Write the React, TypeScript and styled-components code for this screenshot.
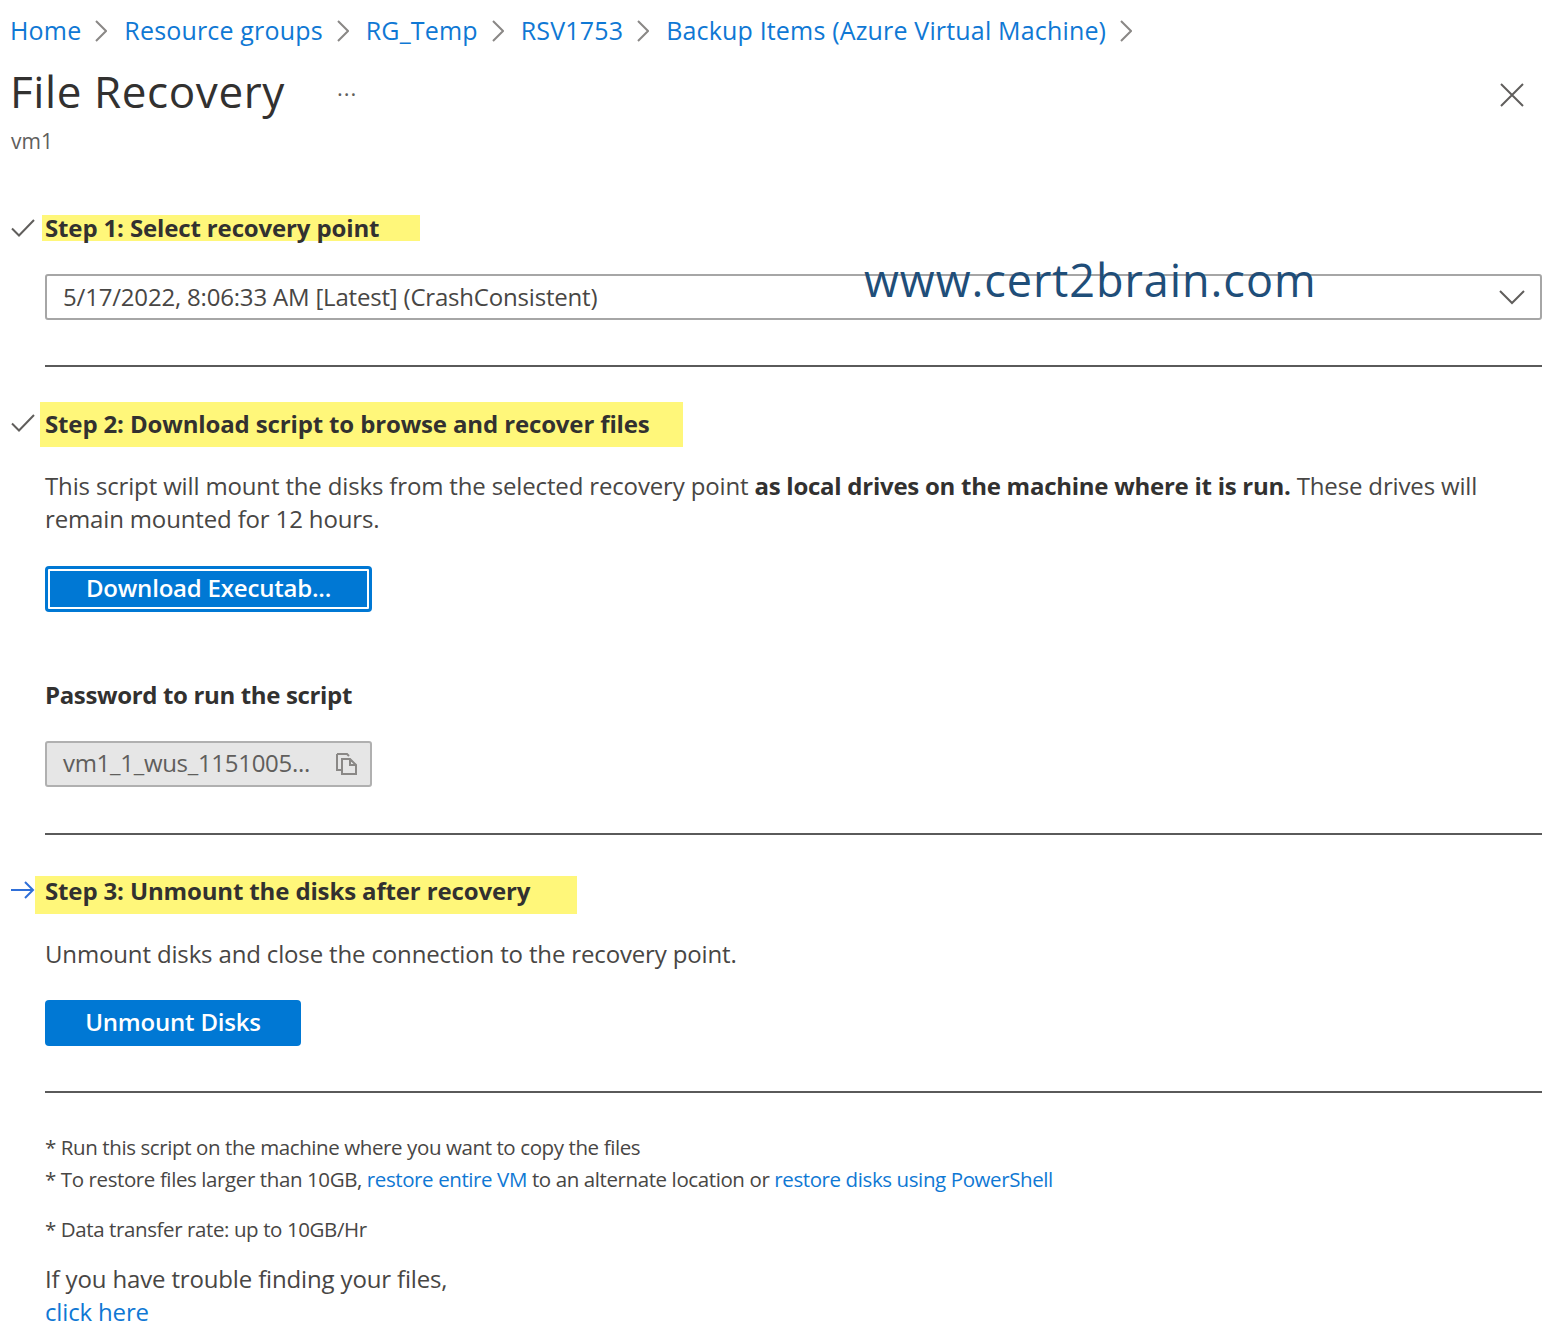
import React from "react";
import styled, { createGlobalStyle } from "styled-components";

const Global = createGlobalStyle`
  html, body { margin: 0; padding: 0; background: #fff; }
  body { font-family: "Open Sans", "Liberation Sans", sans-serif; color: #323130; }
`;

const Page = styled.div`
  position: relative;
  width: 1550px;
  height: 1343px;
  box-sizing: border-box;
  padding: 0 8px 0 11px;
  overflow: hidden;
`;

const Breadcrumb = styled.nav`
  display: flex;
  align-items: center;
  height: 60px;
  margin-left: -1px;
  font-size: 25px;
  letter-spacing: 0.17px;
`;

const Crumb = styled.a`
  color: #0f78d4;
`;

const CrumbSep = styled.svg`
  width: 12px;
  height: 22px;
  margin: 2px 17px 0 14px;
  fill: none;
  stroke: #8a8886;
  stroke-width: 2;
`;

const TitleRow = styled.div`
  display: flex;
  align-items: center;
  height: 66px;
`;

const Title = styled.h1`
  margin: -4px 0 0 -1px;
  font-size: 44px;
  font-weight: 500;
  letter-spacing: 0.6px;
  color: #323130;
`;

const More = styled.span`
  margin: 0 0 0 52px;
  font-size: 22px;
  letter-spacing: 1px;
  color: #605e5c;
`;

const Close = styled.svg`
  width: 24px;
  height: 24px;
  margin: 4px 18px 0 auto;
  stroke: #605e5c;
  stroke-width: 2;
`;

const Sub = styled.div`
  font-size: 21px;
  line-height: 30px;
  color: #605e5c;
`;

const StepRow = styled.div<{ $top: number; $height: number }>`
  display: flex;
  align-items: center;
  height: ${(p) => p.$height}px;
  margin-top: ${(p) => p.$top}px;
`;

const StepIcon = styled.svg<{ $lift?: number }>`
  flex: none;
  width: 24px;
  height: 20px;
  margin-bottom: ${(p) => p.$lift ?? 0}px;
  fill: none;
  stroke-width: 2;
`;

const StepLabel = styled.h2<{ $left: number; $width: number; $pad: number; $lift?: number }>`
  box-sizing: border-box;
  display: flex;
  align-items: center;
  width: ${(p) => p.$width}px;
  height: 100%;
  margin: 0 0 0 ${(p) => p.$left}px;
  padding: 0 0 ${(p) => p.$lift ?? 2}px ${(p) => p.$pad}px;
  background: #fff77a;
  font-size: 24px;
  font-weight: 700;
  letter-spacing: -0.14px;
  color: #323130;
`;

const Body = styled.div`
  padding-left: 34px;
`;

const Select = styled.div`
  display: flex;
  align-items: center;
  justify-content: space-between;
  box-sizing: border-box;
  height: 46px;
  margin-top: 33px;
  padding: 0 15px 2px 16px;
  border: 2px solid #a6a6a6;
  border-radius: 3px;
  font-size: 24px;
  letter-spacing: -0.19px;
  color: #484644;
`;

const Chevron = styled.svg`
  width: 26px;
  height: 16px;
  margin-top: 2px;
  fill: none;
  stroke: #605e5c;
  stroke-width: 2;
`;

const Rule = styled.hr<{ $top: number }>`
  height: 2px;
  margin: ${(p) => p.$top}px 0 0;
  border: 0;
  background: #5a5a5a;
`;

const Para = styled.p<{ $top: number }>`
  margin: ${(p) => p.$top}px 0 0;
  font-size: 24px;
  line-height: 33px;
  letter-spacing: -0.15px;
  color: #484644;

  b {
    letter-spacing: -0.26px;
    color: #323130;
  }
`;

const Button = styled.button<{ $top: number; $width: number; $focus?: boolean }>`
  display: block;
  box-sizing: border-box;
  width: ${(p) => p.$width}px;
  height: 46px;
  margin-top: ${(p) => p.$top}px;
  padding: 0 0 4px;
  border: 0;
  border-radius: 4px;
  background: #0078d4;
  color: #fff;
  font-family: inherit;
  font-size: 24px;
  font-weight: 600;
  letter-spacing: -0.2px;
  outline: ${(p) => (p.$focus ? "2px solid #fff" : "none")};
  outline-offset: -5px;
`;

const FieldLabel = styled.div`
  margin-top: 66px;
  font-size: 24px;
  line-height: 33px;
  font-weight: 700;
  letter-spacing: -0.35px;
  color: #323130;
`;

const CopyField = styled.div`
  display: flex;
  align-items: center;
  justify-content: space-between;
  box-sizing: border-box;
  width: 327px;
  height: 46px;
  margin-top: 30px;
  padding: 0 11px 0 16px;
  border: 2px solid #b0b0b0;
  border-radius: 3px;
  background: #e6e6e6;
  font-size: 24px;
  letter-spacing: -0.3px;
  color: #605e5c;

  span {
    margin-bottom: 4px;
  }
`;

const CopyIcon = styled.svg`
  width: 24px;
  height: 24px;
  fill: none;
  stroke: #8a8886;
  stroke-width: 2;
`;

const Note = styled.div<{ $top?: number }>`
  margin-top: ${(p) => p.$top ?? 0}px;
  font-size: 20.5px;
  line-height: 32px;
  letter-spacing: -0.4px;
  color: #484644;
`;

const Link = styled.a`
  color: #0f78d4;
`;

const Watermark = styled.div`
  position: absolute;
  left: 864px;
  top: 250px;
  font-size: 45px;
  line-height: 60px;
  letter-spacing: 0.95px;
  color: #1f4e79;
`;

const crumbs = ["Home", "Resource groups", "RG_Temp", "RSV1753", "Backup Items (Azure Virtual Machine)"];

const Check = ({ lift }: { lift?: number }) => (
  <StepIcon viewBox="0 0 24 20" stroke="#605e5c" $lift={lift}>
    <path d="M1 10.5 L8 17.5 L23 2" />
  </StepIcon>
);

export default function App() {
  return (
    <Page>
      <Global />
      <Breadcrumb>
        {crumbs.map((c) => (
          <React.Fragment key={c}>
            <Crumb>{c}</Crumb>
            <CrumbSep viewBox="0 0 12 22">
              <path d="M1 1 L11 11 L1 21" />
            </CrumbSep>
          </React.Fragment>
        ))}
      </Breadcrumb>
      <TitleRow>
        <Title>File Recovery</Title>
        <More>···</More>
        <Close viewBox="0 0 24 24">
          <path d="M1 1 L23 23 M23 1 L1 23" />
        </Close>
      </TitleRow>
      <Sub>vm1</Sub>

      <StepRow $top={59} $height={26}>
        <Check />
        <StepLabel $left={7} $width={378} $pad={3}>Step 1: Select recovery point</StepLabel>
      </StepRow>
      <Body>
        <Select>
          5/17/2022, 8:06:33 AM [Latest] (CrashConsistent)
          <Chevron viewBox="0 0 26 16">
            <path d="M1 2 L13 14 L25 2" />
          </Chevron>
        </Select>
        <Rule $top={45} />
      </Body>

      <StepRow $top={35} $height={45}>
        <Check lift={3} />
        <StepLabel $left={5} $width={643} $pad={5}>Step 2: Download script to browse and recover files</StepLabel>
      </StepRow>
      <Body>
        <Para $top={22}>
          This script will mount the disks from the selected recovery point <b>as local drives on the machine where it is run.</b> These drives will
          <br />
          remain mounted for 12 hours.
        </Para>
        <Button $top={31} $width={327} $focus>Download Executab...</Button>
        <FieldLabel>Password to run the script</FieldLabel>
        <CopyField>
          <span>vm1_1_wus_1151005...</span>
          <CopyIcon viewBox="0 0 24 24">
            <path d="M2 2 H12 L14 4 M7 7 H15 L21 13 V22 H7 Z M15 7 V13 H21 M2 2 V18 H7" />
          </CopyIcon>
        </CopyField>
        <Rule $top={46} />
      </Body>

      <StepRow $top={41} $height={38}>
        <StepIcon viewBox="0 0 24 20" stroke="#2f6fd8" $lift={10}>
          <path d="M0 10 H22 M14 2 L22 10 L14 18" />
        </StepIcon>
        <StepLabel $left={0} $width={542} $pad={10} $lift={10}>Step 3: Unmount the disks after recovery</StepLabel>
      </StepRow>
      <Body>
        <Para $top={23}>Unmount disks and close the connection to the recovery point.</Para>
        <Button $top={30} $width={256}>Unmount Disks</Button>
        <Rule $top={45} />
        <Note $top={38}>* Run this script on the machine where you want to copy the files</Note>
        <Note>
          * To restore files larger than 10GB, <Link>restore entire VM</Link> to an alternate location or <Link>restore disks using PowerShell</Link>
        </Note>
        <Note $top={18}>* Data transfer rate: up to 10GB/Hr</Note>
        <Para $top={17}>
          If you have trouble finding your files,
          <br />
          <Link>click here</Link>
        </Para>
      </Body>
      <Watermark>www.cert2brain.com</Watermark>
    </Page>
  );
}
